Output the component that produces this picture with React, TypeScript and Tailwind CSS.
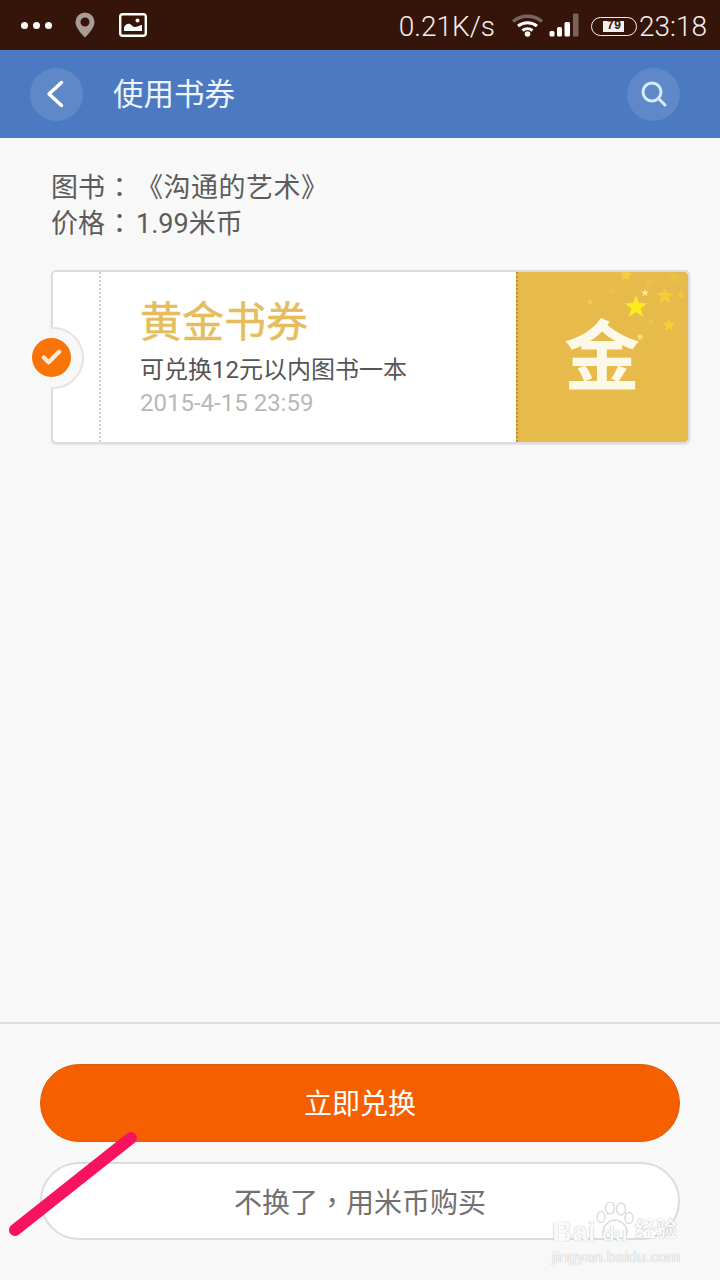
import { Check } from 'lucide-react';

const cjk = "font-['Roboto','Noto_Sans_CJK_SC',sans-serif] [text-spacing-trim:space-all]";
// TC glyphs sit centred in the cell, like the punctuation in the screenshot
const punct = "font-['Noto_Sans_CJK_TC',sans-serif]";

function Star({ x, y, r, fill, opacity = 1 }: { x: number; y: number; r: number; fill: string; opacity?: number }) {
    const pts = Array.from({ length: 10 }, (_, i) => {
        const rad = i % 2 === 0 ? r : r * 0.42;
        const a = (Math.PI / 5) * i - Math.PI / 2;
        return `${(x + rad * Math.cos(a)).toFixed(1)},${(y + rad * Math.sin(a)).toFixed(1)}`;
    }).join(' ');
    return <polygon points={pts} fill={fill} opacity={opacity} />;
}

function StatusBar() {
    return (
        <div className="h-[50px] shrink-0 bg-[#351509] flex items-center pl-[21px] pr-[13px] text-[#f4efec]">
            <div className="flex gap-[5px]">
                <span className="w-[7px] h-[7px] rounded-full bg-white" />
                <span className="w-[7px] h-[7px] rounded-full bg-white" />
                <span className="w-[7px] h-[7px] rounded-full bg-white" />
            </div>
            <svg className="ml-[23px]" width="20" height="26" viewBox="0 0 20 26">
                <path fillRule="evenodd" d="M10 0.5a9.5 9.5 0 0 1 9.5 9.5c0 5-5 11-9.5 15.5C5.500 21 0.500 15 0.500 10A9.500 9.500 0 0 1 10 0.500zM10 5.500a4.500 4.500 0 1 0 0 9 4.500 4.500 0 0 0 0-9z" fill="#a89c96" />
            </svg>
            <svg className="ml-[24px]" width="28" height="24" viewBox="0 0 28 24">
                <rect x="1.200" y="1.200" width="25.600" height="21.600" rx="2.500" fill="none" stroke="#fff" strokeWidth="2.400" />
                <path d="M5 18v-4c2-3 4-4 6-3 2 1 3 3 5 3 2 0 3-1 7-2v6z" fill="#fff" />
                <circle cx="18.500" cy="7.500" r="2" fill="#fff" />
            </svg>
            <span className="ml-auto mt-[4px] font-['Roboto',sans-serif] font-light text-[28px] leading-none">0.21K/s</span>
            <svg className="ml-[16px]" width="33" height="24" viewBox="0 0 33 24">
                <path d="M2 8.500C10 1.500 23 1.500 31 8.500" fill="none" stroke="#7a635a" strokeWidth="3.500" />
                <path d="M7 13C12.500 8.500 20.500 8.500 26 13" fill="none" stroke="#fff" strokeWidth="3" />
                <path d="M11.500 17.500C14.500 15 18.500 15 21.500 17.500" fill="none" stroke="#fff" strokeWidth="3" />
                <circle cx="16.500" cy="21" r="2.800" fill="#fff" />
            </svg>
            <svg className="ml-[5px]" width="34" height="24" viewBox="0 0 34 24">
                <rect x="0.500" y="18" width="5" height="5.500" rx="1.500" fill="#fff" />
                <rect x="8" y="14" width="5" height="9.500" rx="1.500" fill="#fff" />
                <rect x="15.500" y="9" width="5.500" height="14.500" rx="1.500" fill="#fff" />
                <rect x="24" y="0.500" width="5.500" height="23" rx="1" fill="#7a635a" />
            </svg>
            <div className="ml-[8px] mt-[2px] w-[46px] h-[19px] border-[1.500px] border-[#f4efec] rounded-full flex items-center justify-center">
                <span className="w-[21px] h-[11px] bg-[#f4efec] flex items-center justify-center font-['Liberation_Mono',monospace] font-bold text-[12px] leading-none text-[#351509]">79</span>
            </div>
            <span className="ml-[2px] mt-[4px] font-['Roboto',sans-serif] font-light text-[28px] leading-none">23:18</span>
        </div>
    );
}

function Header() {
    return (
        <div className="h-[88px] shrink-0 bg-[#4b7ac3] flex items-center pl-[30px] pr-[40px]">
            <div className="w-[53px] h-[53px] rounded-full bg-[#5f88c9] flex items-center justify-center">
                <svg className="-ml-[3px]" width="18" height="28" viewBox="0 0 18 28" fill="none" stroke="#fff" strokeWidth="3.400" strokeLinecap="round" strokeLinejoin="round">
                    <path d="M15.500 2.500L3 14l12.500 11.500" />
                </svg>
            </div>
            <h1 className={`ml-[30px] mt-[3px] text-[30.500px] leading-none text-[#eef4fb] ${cjk}`}>使用书券</h1>
            <div className="ml-auto w-[53px] h-[53px] rounded-full bg-[#5f88c9] flex items-center justify-center">
                <svg width="28" height="28" viewBox="0 0 28 28" fill="none" stroke="#d8eafc" strokeWidth="3" strokeLinecap="round">
                    <circle cx="12" cy="12" r="9" />
                    <path d="M19 19l6 6" />
                </svg>
            </div>
        </div>
    );
}

function CouponCard() {
    return (
        <div className="relative ml-[51px] mr-[30px] h-[174px] flex rounded-[5px] border-2 border-[#dcdcdc] bg-white shadow-[0_1px_2px_rgba(0,0,0,0.08)]">
            {/* notch */}
            <div className="absolute -left-[33px] top-[55px] w-[64px] h-[62px] rounded-full bg-[#f8f8f8] border-2 border-[#e4e4e4] [clip-path:inset(0_0_0_31px)]" />
            <div className="absolute -left-[21px] top-[66px] w-[39px] h-[39px] rounded-full bg-[#f97306] flex items-center justify-center">
                <Check size={23} strokeWidth={4.500} className="text-[#fde9d6]" />
            </div>

            <div className="w-[48px] shrink-0 border-r-2 border-dotted border-[#cfcfcf]" />
            <div className={`flex-1 pl-[39px] pt-[27px] ${cjk}`}>
                <div className="text-[42px] leading-[48px] text-[#e6bd5c] [-webkit-text-stroke:0.5px_#e6bd5c]">黄金书券</div>
                <div className="mt-[7px] text-[24px] leading-[32px] text-[#555555]">可兑换12元以内图书一本</div>
                <div className="mt-[1px] text-[24px] leading-[32px] text-[#b8b8b8]">2015-4-15 23:59</div>
            </div>
            <div className="relative w-[172px] shrink-0 rounded-r-[4px] bg-[#e7ba4c] border-l-2 border-dotted border-[#b0923a] flex items-center justify-center">
                <svg className="absolute inset-0" width="170" height="170" viewBox="0 0 170 170">
                    <Star x={108} y={3} r={7} fill="#f6cf3c" />
                    <Star x={131} y={11} r={6} fill="#edc44a" opacity={0.7} />
                    <Star x={94} y={19} r={6} fill="#edc44a" opacity={0.7} />
                    <Star x={156} y={6} r={8} fill="#edc44a" opacity={0.6} />
                    <Star x={147} y={24} r={9} fill="#f5cc35" />
                    <Star x={163} y={23} r={4} fill="#f5cc35" />
                    <Star x={127} y={21} r={4} fill="#fbeb9a" />
                    <Star x={118} y={35} r={12} fill="#fdea1f" />
                    <Star x={72} y={30} r={4} fill="#f3cc45" />
                    <Star x={133} y={49} r={4} fill="#edc44a" />
                    <Star x={151} y={53} r={7} fill="#f7d030" />
                    <Star x={122} y={65} r={4} fill="#fbe36a" />
                </svg>
                <span className="relative -mt-[12px] -ml-[2px] font-['Noto_Sans_CJK_SC',sans-serif] font-bold text-[76px] leading-none text-[#fdf8e8]">金</span>
            </div>
        </div>
    );
}

function Watermark() {
    return (
        <div className="absolute left-[552px] top-[1202px] w-[130px] h-[64px] font-['Liberation_Sans',sans-serif] text-[#fafafa] [text-shadow:0_0_1px_#999]">
            <svg className="absolute left-[43px] top-0" width="40" height="38" viewBox="0 0 40 38" fill="none" stroke="#dcdcdc" strokeWidth="1.500">
                <ellipse cx="6" cy="15" rx="4" ry="5.500" />
                <ellipse cx="15" cy="6" rx="4.500" ry="6" />
                <ellipse cx="26" cy="7" rx="4.500" ry="6" />
                <ellipse cx="34" cy="16" rx="4" ry="5.500" />
                <path d="M8 30c0-7 7-12 12-12s12 5 12 12c0 5-5 7-12 7s-12-2-12-7z" />
            </svg>
            <span className="absolute left-0 top-[16px] text-[28px] leading-none font-bold">Bai</span>
            <span className="absolute left-[50px] top-[21px] text-[21px] leading-none font-bold">du</span>
            <span className={`absolute left-[83px] top-[17px] text-[21px] leading-none font-bold ${cjk}`}>经验</span>
            <span className="absolute left-0 top-[47px] text-[15.500px] leading-none tracking-[0.2px]">jingyan.baidu.com</span>
        </div>
    );
}

export default function App() {
    return (
        <div className="relative w-[720px] h-[1280px] overflow-hidden flex flex-col bg-[#f8f8f8]">
            <StatusBar />
            <Header />

            <div className="flex-1 flex flex-col">
                <div className={`pl-[51px] pt-[30px] text-[27px] leading-[36px] text-[#5c5c5c] ${cjk}`}>
                    <div className="h-[36px]">图书<span className={`${punct} ml-[1px] mr-[3px]`}>：</span><span className="tracking-[0.5px]">《沟通的艺术》</span></div>
                    <div className="h-[36px]">价格<span className={`${punct} ml-[1px] mr-[3px]`}>：</span>1.99米币</div>
                </div>
                <div className="mt-[30px]">
                    <CouponCard />
                </div>
            </div>

            {/* bottom actions */}
            <div className={`h-[258px] shrink-0 border-t-2 border-[#dedede] px-[40px] pt-[40px] flex flex-col gap-[20px] ${cjk}`}>
                <button className="h-[78px] pt-[3px] rounded-full bg-[#f55f00] border border-[#d9600f] text-white text-[28px]">立即兑换</button>
                <button className="h-[78px] pt-[3px] rounded-full bg-white border-2 border-[#dcdcdc] text-[#707070] text-[28px]">不换了<span className={punct}>，</span>用米币购买</button>
            </div>

            {/* annotation stroke */}
            <svg className="absolute left-0 top-[1120px]" width="150" height="130" viewBox="0 0 150 130">
                <line x1="15" y1="110" x2="131" y2="18" stroke="#f8135f" strokeWidth="12" strokeLinecap="round" />
            </svg>
            <Watermark />
        </div>
    );
}
